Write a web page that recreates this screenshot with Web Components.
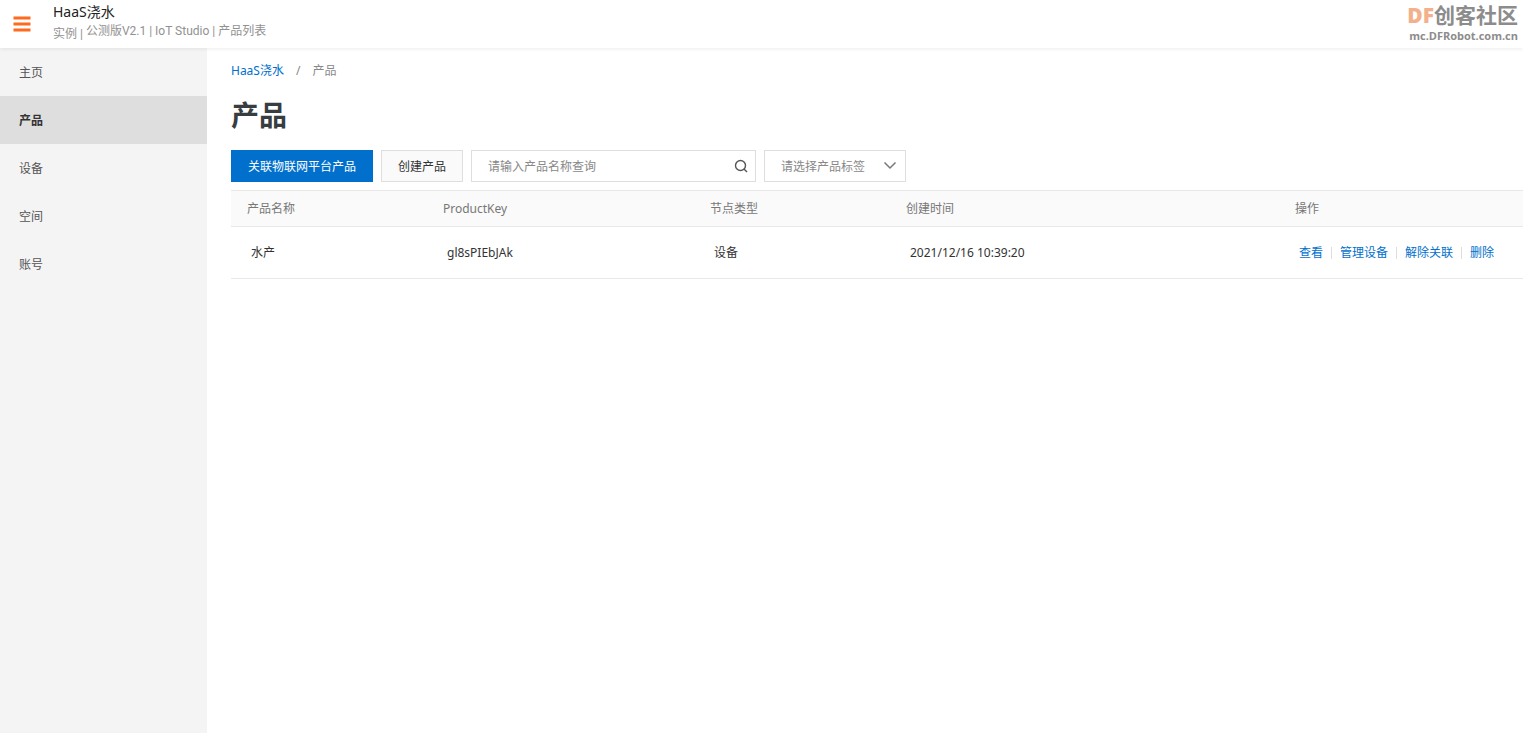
<!DOCTYPE html>
<html lang="zh-CN">
<head>
<meta charset="utf-8">
<meta name="viewport" content="width=device-width, initial-scale=1">
<title>产品 - IoT Studio</title>
<style>
  body {
    margin: 0;
    background: #fff;
    color: #333;
    font: 12px/18px "Noto Sans", "Noto Sans CJK SC", sans-serif;
    --blue: #0070cc;
    --line: #e8e8e8;
    --field: #dedede;
  }
</style>
</head>
<body>
<iot-shell>
  <iot-header slot="header">
    <span slot="title">HaaS浇水</span>
    <span slot="kind">实例 |</span>
    <span slot="path">公测版V2.1 | IoT Studio | 产品列表</span>
    <community-mark slot="brand"></community-mark>
  </iot-header>
  <side-nav slot="nav">
    <nav-item>主页</nav-item>
    <nav-item active>产品</nav-item>
    <nav-item>设备</nav-item>
    <nav-item>空间</nav-item>
    <nav-item>账号</nav-item>
  </side-nav>
  <page-title parent="HaaS浇水">产品</page-title>
  <tool-bar>
    <action-button primary>关联物联网平台产品</action-button>
    <action-button>创建产品</action-button>
    <search-field placeholder="请输入产品名称查询"></search-field>
    <tag-select placeholder="请选择产品标签"></tag-select>
  </tool-bar>
  <product-table></product-table>
</iot-shell>

<script>
const define = (name, html, setup) => {
  const template = document.createElement('template');
  template.innerHTML = html;
  customElements.define(name, class extends HTMLElement {
    constructor() {
      super();
      this.attachShadow({ mode: 'open' }).append(template.content.cloneNode(true));
    }
    connectedCallback() {
      if (setup) setup(this, this.shadowRoot);
    }
  });
};

define('iot-shell', `
  <style>
    :host { display: flex; flex-direction: column; min-height: 100vh; }
    .body { display: grid; grid-template-columns: 207px minmax(0, 1fr); flex: 1; }
    main { padding: 13px 0 0 24px; }
  </style>
  <slot name="header"></slot>
  <div class="body">
    <slot name="nav"></slot>
    <main><slot></slot></main>
  </div>`);

define('iot-header', `
  <style>
    :host { display: block; z-index: 1; background: #fff; box-shadow: 0 1px 4px rgba(0, 0, 0, .08); }
    header { display: flex; align-items: flex-start; height: 48px; }
    button { display: flex; align-items: center; justify-content: center; width: 44px; height: 48px; padding: 0; border: 0; background: none; }
    .text { flex: 1; padding: 2px 0 0 9px; }
    .title { font-size: 14px; line-height: 20px; color: #222; }
    .sub { display: flex; gap: 3px; height: 21px; color: #919191; font-family: Roboto, "Noto Sans CJK SC", sans-serif; }
    .kind { align-self: flex-end; }
  </style>
  <header>
    <button type="button" aria-label="菜单">
      <svg width="18" height="16" viewBox="0 0 18 16"><path d="M0.5 0.5h17v3H0.5zM0.5 6.5h17v3H0.5zM0.5 12.5h17v3H0.5z" fill="#ff6a1f"/></svg>
    </button>
    <div class="text">
      <div class="title"><slot name="title"></slot></div>
      <div class="sub"><span class="kind"><slot name="kind"></slot></span><span><slot name="path"></slot></span></div>
    </div>
    <slot name="brand"></slot>
  </header>`);

define('community-mark', `
  <style>
    :host { display: block; padding: 3px 5px 0 0; text-align: right; font-weight: 700; color: #8c8c8c; }
    .name { font-size: 21px; line-height: 24px; }
    b { color: #f3b08c; }
    .site { font-size: 11px; line-height: 17px; font-family: "Open Sans", sans-serif; }
  </style>
  <div class="name"><b>DF</b>创客社区</div>
  <div class="site">mc.DFRobot.com.cn</div>`);

define('side-nav', `
  <style>
    :host { display: block; background: #f4f4f4; }
  </style>
  <nav><slot></slot></nav>`);

define('nav-item', `
  <style>
    :host { display: block; }
    a { display: block; padding: 1px 19px 0; line-height: 47px; color: #555; text-decoration: none; }
    :host([active]) a { background: #dedede; color: #333; font-weight: 700; }
  </style>
  <a href="#"><slot></slot></a>`);

define('page-title', `
  <style>
    :host { display: block; }
    nav { display: flex; gap: 12px; line-height: 20px; color: #888; }
    a { color: var(--blue); text-decoration: none; }
    h1 { margin: 14px 0 15px; font-size: 28px; line-height: 40px; color: #373d41; }
  </style>
  <nav><a href="#"></a><span>/</span><span class="here"></span></nav>
  <h1><slot></slot></h1>`,
  (host, root) => {
    root.querySelector('a').textContent = host.getAttribute('parent');
    root.querySelector('.here').textContent = host.textContent;
  });

define('tool-bar', `
  <style>
    :host { display: flex; flex-wrap: wrap; gap: 8px; margin-bottom: 8px; }
  </style>
  <slot></slot>`);

define('action-button', `
  <style>
    :host { display: block; }
    button { box-sizing: border-box; height: 32px; padding: 2px 16px 0; border: 1px solid var(--field); background: #fafafa; color: #333; font: inherit; }
    :host([primary]) button { border-color: var(--blue); background: var(--blue); color: #fff; }
  </style>
  <button type="button"><slot></slot></button>`);

define('search-field', `
  <style>
    :host { display: flex; align-items: center; box-sizing: border-box; width: 285px; height: 32px; padding: 0 7px 0 16px; border: 1px solid var(--field); }
    input { flex: 1; min-width: 0; height: 30px; padding: 0; border: 0; outline: 0; background: none; color: #333; font: inherit; }
    input::placeholder { color: #888; }
    button { display: flex; padding: 0; border: 0; background: none; }
  </style>
  <input type="text">
  <button type="button" aria-label="查询">
    <svg width="14" height="14" viewBox="0 0 14 14" fill="none" stroke="#555" stroke-width="1.4"><circle cx="6.5" cy="6.5" r="5"/><path d="M10 10l3 3"/></svg>
  </button>`,
  (host, root) => {
    const input = root.querySelector('input');
    input.placeholder = host.getAttribute('placeholder');
    input.setAttribute('aria-label', input.placeholder);
  });

define('tag-select', `
  <style>
    :host { display: grid; box-sizing: border-box; width: 142px; height: 32px; border: 1px solid var(--field); align-items: center; }
    select, svg { grid-area: 1 / 1; }
    select { appearance: none; width: 100%; height: 30px; padding: 2px 32px 0 16px; border: 0; outline: 0; background: none; color: #888; font: inherit; }
    svg { justify-self: end; margin-right: 8px; pointer-events: none; }
  </style>
  <select><option></option></select>
  <svg width="14" height="10" viewBox="0 0 14 10" fill="none" stroke="#777" stroke-width="1.5"><path d="M1.5 1.5L7 7l5.5-5.5"/></svg>`,
  (host, root) => {
    const text = host.getAttribute('placeholder');
    root.querySelector('option').textContent = text;
    root.querySelector('select').setAttribute('aria-label', text);
  });

define('product-table', `
  <style>
    :host { display: block; }
    table { width: 100%; table-layout: fixed; border-collapse: collapse; border-top: 1px solid var(--line); }
    th, td { text-align: left; border-bottom: 1px solid var(--line); white-space: nowrap; }
    th { height: 35px; padding: 0 16px; background: #fafafa; color: #777; font-weight: 400; }
    td { height: 51px; padding: 0 20px; }
    .actions { display: flex; align-items: center; }
    a { color: var(--blue); text-decoration: none; }
    a + a { display: flex; align-items: center; }
    a + a::before { content: ""; height: 12px; margin: 0 8px; border-left: 1px solid #dedede; }
  </style>
  <table>
    <colgroup>
      <col style="width:196px"><col style="width:267px"><col style="width:196px"><col style="width:389px"><col style="width:244px">
    </colgroup>
    <thead><tr><th>产品名称</th><th>ProductKey</th><th>节点类型</th><th>创建时间</th><th>操作</th></tr></thead>
    <tbody>
      <tr>
        <td>水产</td><td>gl8sPIEbJAk</td><td>设备</td><td>2021/12/16 10:39:20</td>
        <td><div class="actions"><a href="#">查看</a><a href="#">管理设备</a><a href="#">解除关联</a><a href="#">删除</a></div></td>
      </tr>
    </tbody>
  </table>`);
</script>
</body>
</html>
